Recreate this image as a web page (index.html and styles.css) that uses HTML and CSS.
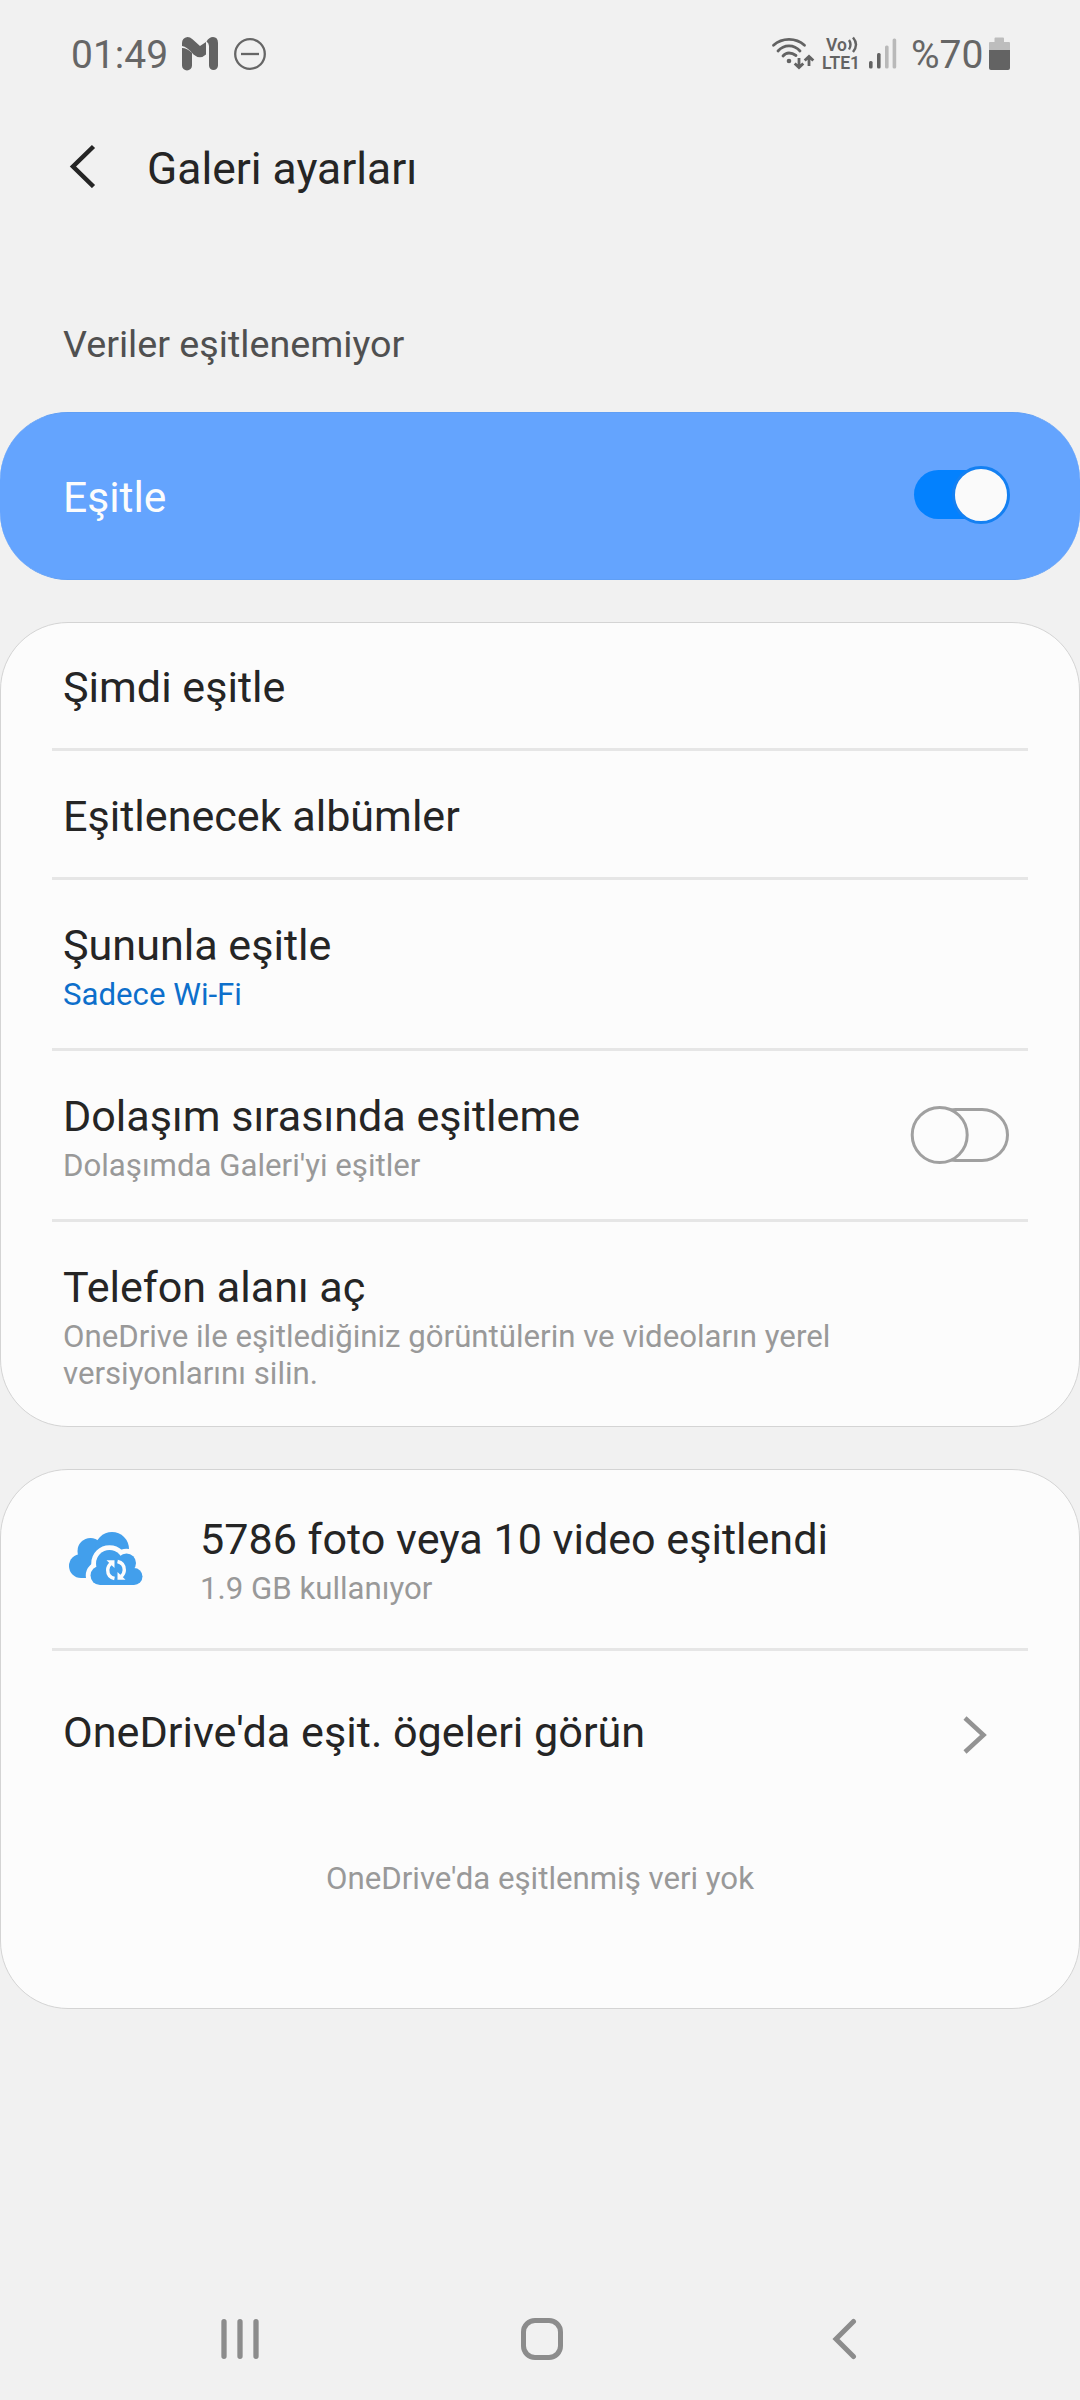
FILE: index.html
```
<!DOCTYPE html>
<html lang="tr">
<head>
<meta charset="utf-8">
<title>Galeri ayarları</title>
<link rel="stylesheet" href="styles.css">
</head>
<body>
<div class="screen">
  <header class="status">
    <span class="clock">01:49</span>
    <svg class="gmail" width="36" height="34" viewBox="0 0 36 34">
      <path fill="#636363" d="M0 15.500V11Q5 11 10 16V28.500a5 5 0 0 1-10 0ZM0 9V6Q0 1 5.500 0Q8 0 10.500 2.300L18 9L24 5V17.500Q18 23 11.500 17.500Q5 9.500 0 9Z"/>
      <path fill="#636363" d="M27 28.500V9Q27 6 24.500 4.500Q27 0 31 0Q36 0 36 6V28.500a4.500 4.500 0 0 1-9 0Z"/>
    </svg>
    <svg class="dnd" width="32" height="32" viewBox="0 0 32 32" fill="none" stroke="#666" stroke-width="2.300">
      <circle cx="16" cy="16" r="14.800"/><path d="M7 16H25"/>
    </svg>
    <svg class="wifi" width="44" height="34" viewBox="0 0 44 34" fill="none" stroke="#636363" stroke-width="2.800">
      <path stroke-linecap="round" d="M2.500 8.300Q9 2.400 18 2.400T33.500 8.300M7 14Q11.500 8.900 18 8.900T29 14M12 19Q14.500 16 18 16T25 18.500"/>
      <circle cx="18" cy="24" r="2.300" fill="#636363" stroke="none"/>
      <path d="M28 21V29M23.700 26.500L28 30.600L32.300 26.500M38 29V21M33.700 23.500L38 19.400L42.300 23.500"/>
    </svg>
    <div class="volte">
      <span class="vo">Vo<svg width="12" height="18" viewBox="0 0 12 18" fill="none" stroke="#636363" stroke-width="2.400"><path d="M1 4Q4 8.500 1 13.500M5 1.500Q11 8.500 5 16"/></svg></span>
      <span class="lte">LTE1</span>
    </div>
    <svg class="signal" width="28" height="31" viewBox="0 0 28 31">
      <rect x="0" y="23" width="3.600" height="7.500" rx="1.500" fill="#636363"/>
      <rect x="8" y="15" width="3.600" height="15.500" rx="1.500" fill="#636363"/>
      <rect x="16" y="7.500" width="3.600" height="23" rx="1.500" fill="#b9b9b9"/>
      <rect x="23.600" y="0.500" width="3.600" height="30" rx="1.500" fill="#b9b9b9"/>
    </svg>
    <span class="percent">%70</span>
    <svg class="battery" width="21" height="33" viewBox="0 0 21 33">
      <path fill="#bdbdbd" d="M5.500 5V1.500Q5.500 0.500 6.500 0.500H14Q15 0.500 15 1.500V5H20Q21 5 21 6V13H0V6Q0 5 1 5Z"/>
      <path fill="#636363" d="M0 13H21V31Q21 33 19 33H2Q0 33 0 31Z"/>
    </svg>
  </header>

  <div class="titlebar">
    <svg width="28" height="44" viewBox="0 0 28 44" fill="none" stroke="#252525" stroke-width="4.500"><path d="M25.500 2.500L5 22.500L25.500 42.500"/></svg>
    <h1>Galeri ayarları</h1>
  </div>

  <p class="notice">Veriler eşitlenemiyor</p>

  <section class="master">
    <span class="name">Eşitle</span>
    <svg width="98" height="60" viewBox="0 0 98 60">
      <rect x="2" y="5" width="90" height="49" rx="24.500" fill="#0381fe"/>
      <circle cx="69" cy="30" r="27.500" fill="#fafafa" stroke="#1480f2" stroke-width="3"/>
    </svg>
  </section>

  <section class="card options">
    <div class="row"><div class="name">Şimdi eşitle</div></div>
    <div class="row"><div class="name">Eşitlenecek albümler</div></div>
    <div class="row two"><div class="name">Şununla eşitle</div><div class="sub link">Sadece Wi-Fi</div></div>
    <div class="row two switch">
      <div><div class="name">Dolaşım sırasında eşitleme</div><div class="sub">Dolaşımda Galeri'yi eşitler</div></div>
      <svg width="100" height="60" viewBox="0 0 100 60" fill="#fcfcfc" stroke="#a0a0a0" stroke-width="3">
        <rect x="20" y="4.500" width="77.500" height="51" rx="25.500"/>
        <circle cx="29.700" cy="30" r="27.500"/>
      </svg>
    </div>
    <div class="row two"><div class="name">Telefon alanı aç</div><div class="sub">OneDrive ile eşitlediğiniz görüntülerin ve videoların yerel<br>versiyonlarını silin.</div></div>
  </section>

  <section class="card cloud">
    <div class="row synced">
      <svg width="74" height="54" viewBox="0 0 74 54">
        <g fill="#429fec">
          <circle cx="12" cy="34" r="12"/><circle cx="21.500" cy="19" r="13"/><circle cx="43" cy="17" r="17"/>
          <path d="M12 20H44V46H12Z"/>
        </g>
        <g fill="#fcfcfc" stroke="#fcfcfc" stroke-width="9.500">
          <circle cx="40.500" cy="31.500" r="13.500"/><circle cx="57.500" cy="31" r="9.500"/><circle cx="31" cy="43.500" r="9.500"/><circle cx="65" cy="44.500" r="8.500"/>
          <path d="M31 38H65V53H31Z"/>
        </g>
        <g fill="#429fec">
          <circle cx="40.500" cy="31.500" r="13.500"/><circle cx="57.500" cy="31" r="9.500"/><circle cx="31" cy="43.500" r="9.500"/><circle cx="65" cy="44.500" r="8.500"/>
          <path d="M31 34H65V53H31Z"/>
        </g>
        <g fill="none" stroke="#fcfcfc" stroke-width="3.400">
          <path d="M45.500 46.500Q38.700 45 38.700 38Q38.700 34 42 31.500M48.500 29.500Q55.300 31 55.300 38Q55.300 42 52 44.500"/>
          <path fill="#fcfcfc" stroke="none" d="M37.500 28.300H45.500V36ZM56.500 47.700H48.500V40Z"/>
        </g>
      </svg>
      <div><div class="name">5786 foto veya 10 video eşitlendi</div><div class="sub">1.9 GB kullanıyor</div></div>
    </div>
    <div class="row open">
      <div class="name">OneDrive'da eşit. ögeleri görün</div>
      <svg width="24" height="40" viewBox="0 0 24 40" fill="none" stroke="#939393" stroke-width="4.500"><path d="M2 3L20.500 20L2 37"/></svg>
    </div>
    <p class="sub empty">OneDrive'da eşitlenmiş veri yok</p>
  </section>

  <nav class="navbar">
    <svg width="42" height="42" viewBox="0 0 42 42" stroke="#8c8c8c" stroke-width="5.300" stroke-linecap="round"><path d="M5 3.700V38.300M21 3.700V38.300M37 3.700V38.300"/></svg>
    <svg width="42" height="42" viewBox="0 0 42 42" fill="none" stroke="#8c8c8c" stroke-width="5"><rect x="2.500" y="2.500" width="37" height="37" rx="11.500"/></svg>
    <svg width="42" height="42" viewBox="0 0 42 42" fill="none" stroke="#8c8c8c" stroke-width="5" stroke-linecap="round"><path d="M31.500 3.500L14 21L31.500 38.500"/></svg>
  </nav>
</div>
</body>
</html>
```
FILE: styles.css
```
* { box-sizing: border-box; margin: 0; padding: 0; }
body { background: #f1f1f1; font-family: Roboto, "Noto Sans", sans-serif; color: #252525; }
svg { display: block; flex: none; }
.screen { width: 1080px; height: 2400px; display: flex; flex-direction: column; overflow: hidden; }

/* status bar */
.status { height: 106px; padding: 1px 70px 0 71px; display: flex; align-items: center; color: #666; }
.clock, .percent { font-size: 39px; line-height: 48px; font-weight: 400; }
.clock { width: 111px; padding-top: 3px; }
.percent { width: 78px; padding-top: 3px; margin-left: 14px; }
.gmail { margin-right: 16px; }
.wifi { margin-left: auto; margin-right: 7px; }
.volte { width: 47px; font-size: 17.500px; font-weight: 600; line-height: 18px; color: #636363; padding-top: 1px; }
.vo { display: flex; padding-left: 4px; }
.vo svg { margin-left: 1px; }
.lte { display: block; }

/* title */
.titlebar { height: 120px; padding: 0 0 0 68px; display: flex; align-items: center; }
.titlebar h1 { margin: 5px 0 0 51px; font-size: 44.400px; line-height: 52px; font-weight: 400; }
.notice { height: 186px; padding: 96px 0 0 63px; font-size: 37.700px; line-height: 44px; color: #505050; }

.name { font-size: 43.100px; line-height: 52px; white-space: nowrap; }
.sub { font-size: 31.200px; line-height: 37px; color: #999; }
.link { color: #0d6fcb; }

.master { height: 168px; padding: 0 70px 0 63px; display: flex; align-items: center; justify-content: space-between; background: #64a4fe; border: solid #609ff5; border-width: 1px 0; border-radius: 68px; color: #fcfcfc; }
.master .name { margin-top: 2px; font-size: 42.600px; }
.master svg { margin-bottom: 2px; }

.card { margin-top: 42px; background: #fcfcfc; border: 1px solid #d4d4d4; border-radius: 68px; }
.options { height: 805px; }
.cloud { height: 540px; }
.row { margin: 0 51px; padding: 40px 11px 34px; border-bottom: 3px solid #e6e6e6; }
.row:first-child { padding-top: 39px; }
.row.two { padding-bottom: 35px; }
.options .row:last-child { border-bottom: 0; }
.two .sub { margin-top: 4px; }
.switch { display: flex; justify-content: space-between; align-items: center; }
.row.switch { padding-right: 18px; }
.switch svg { margin-bottom: 5px; }

.row.synced { display: flex; align-items: flex-start; padding: 44px 0 41px 17px; }
.synced svg { margin: 18px 57px 0 0; }
.synced .sub { margin-top: 4px; }
.row.open { display: flex; justify-content: space-between; align-items: center; padding: 56px 41px 0 11px; border-bottom: 0; }
.open .name { font-size: 43.200px; }
.open svg { margin-top: 4px; }
.empty { margin-top: 101px; text-align: center; }

.navbar { margin-top: 309px; padding: 0 216px 0 219px; display: flex; justify-content: space-between; }
```
